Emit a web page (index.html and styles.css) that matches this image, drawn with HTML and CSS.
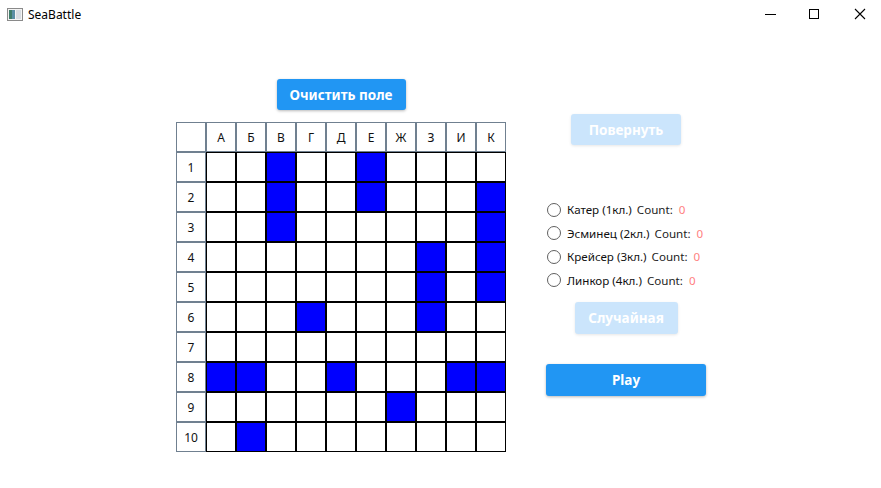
FILE: index.html
```html
<!DOCTYPE html>
<html lang="ru">
<head>
<meta charset="utf-8">
<title>SeaBattle</title>
<link rel="stylesheet" href="styles.css">
</head>
<body>
<div class="window">
  <div class="titlebar">
    <svg class="app-icon" width="16" height="13" viewBox="0 0 16 13">
      <rect x="0.5" y="0.5" width="15" height="12" fill="#f4f4f4" stroke="#8a8a8a"/>
      <rect x="2" y="2" width="6" height="9" fill="#5a8fa6"/>
      <rect x="2" y="2" width="3" height="9" fill="#3f7d6a"/>
      <rect x="9" y="2" width="5" height="9" fill="#d8dde2"/>
    </svg>
    <span class="title">SeaBattle</span>
    <svg class="controls" width="138" height="30" viewBox="0 0 138 30">
      <path d="M22 14.5H33" stroke="#000" stroke-width="1"/>
      <rect x="66.5" y="9.5" width="9" height="9" fill="none" stroke="#000"/>
      <path d="M112 9L122 19M122 9L112 19" stroke="#000" stroke-width="1.1"/>
    </svg>
  </div>
  <div class="main">
    <div class="left">
      <button class="btn btn-clear">Очистить поле</button>
      <div class="board" id="board"></div>
    </div>
    <div class="right">
      <button class="btn btn-rotate disabled">Повернуть</button>
      <div class="ships">
        <label class="ship"><span class="radio"></span><span class="name">Катер (1кл.)</span><span class="cnt">Count:</span><span class="num">0</span></label>
        <label class="ship"><span class="radio"></span><span class="name">Эсминец (2кл.)</span><span class="cnt">Count:</span><span class="num">0</span></label>
        <label class="ship"><span class="radio"></span><span class="name">Крейсер (3кл.)</span><span class="cnt">Count:</span><span class="num">0</span></label>
        <label class="ship"><span class="radio"></span><span class="name">Линкор (4кл.)</span><span class="cnt">Count:</span><span class="num">0</span></label>
      </div>
      <button class="btn btn-random disabled">Случайная</button>
      <button class="btn btn-play">Play</button>
    </div>
  </div>
</div>
<script src="script.js"></script>
</body>
</html>
```
FILE: script.js
```js
(function () {
  var letters = ["А","Б","В","Г","Д","Е","Ж","З","И","К"];
  var ships = {
    1: [2, 5],
    2: [2, 5, 9],
    3: [2, 9],
    4: [7, 9],
    5: [7, 9],
    6: [3, 7],
    7: [],
    8: [0, 1, 4, 8, 9],
    9: [6],
    10: [1]
  };
  var board = document.getElementById("board");
  var html = '<div class="hcell"></div>';
  letters.forEach(function (l) { html += '<div class="hcell">' + l + '</div>'; });
  for (var r = 1; r <= 10; r++) {
    html += '<div class="hcell">' + r + '</div>';
    for (var c = 0; c < 10; c++) {
      html += '<div class="cell' + (ships[r].indexOf(c) >= 0 ? ' ship-cell' : '') + '"></div>';
    }
  }
  board.innerHTML = html;
})();
```
FILE: styles.css
```css
* { box-sizing: border-box; }
html, body { margin: 0; padding: 0; background: #fff; }
body {
  width: 881px;
  height: 488px;
  overflow: hidden;
  font-family: "Noto Sans", "Open Sans", sans-serif;
  font-size: 12px;
  color: #000;
}
.titlebar {
  height: 30px;
  display: flex;
  align-items: center;
}
.app-icon { margin-left: 7px; margin-top: -2px; }
.title { margin-left: 5px; font-size: 12px; margin-top: -2px; }
.controls { margin-left: auto; display: block; }
.main {
  display: flex;
  align-items: flex-start;
}
.left {
  margin-left: 176px;
  padding-top: 49px;
  display: flex;
  flex-direction: column;
  align-items: center;
}
.btn {
  border: none;
  border-radius: 3px;
  background: #2196f3;
  color: #fff;
  font-family: "Noto Sans", "Open Sans", sans-serif;
  font-weight: bold;
  font-size: 13.5px;
  padding: 0;
  box-shadow: 0 1px 3px rgba(0,0,0,0.28);
}
.btn.disabled {
  background: #cbe5fc;
  box-shadow: 0 1px 3px rgba(0,0,0,0.1);
}
.btn-clear { width: 129px; height: 31px; }
.board {
  margin-top: 12px;
  display: grid;
  grid-template-columns: repeat(11, 30px);
  grid-template-rows: repeat(11, 30px);
}
.hcell {
  border: 1px solid #708090;
  display: flex;
  align-items: center;
  justify-content: center;
  font-size: 12px;
  color: #111;
}
.cell {
  border: 1px solid #000;
  background: #fff;
}
.cell.ship-cell { background: #0000ff; }
.right {
  margin-left: 40px;
  width: 160px;
  padding-top: 84px;
  display: flex;
  flex-direction: column;
  align-items: center;
}
.btn-rotate { width: 110px; height: 31px; }
.ships {
  align-self: stretch;
  margin-top: 53px;
  padding-left: 1px;
  font-size: 11.6px;
}
.ship {
  height: 23.5px;
  display: flex;
  align-items: center;
  white-space: nowrap;
}
.radio {
  width: 14px;
  height: 14px;
  border: 1.5px solid #5f5f5f;
  border-radius: 50%;
  margin-right: 6px;
  flex: none;
}
.name { color: #111; }
.cnt { margin-left: 5px; color: #222; }
.num { margin-left: 6px; color: #ff7f7f; }
.btn-random { width: 103px; height: 32px; margin-top: 10px; }
.btn-play { width: 160px; height: 32px; margin-top: 30px; }
```
